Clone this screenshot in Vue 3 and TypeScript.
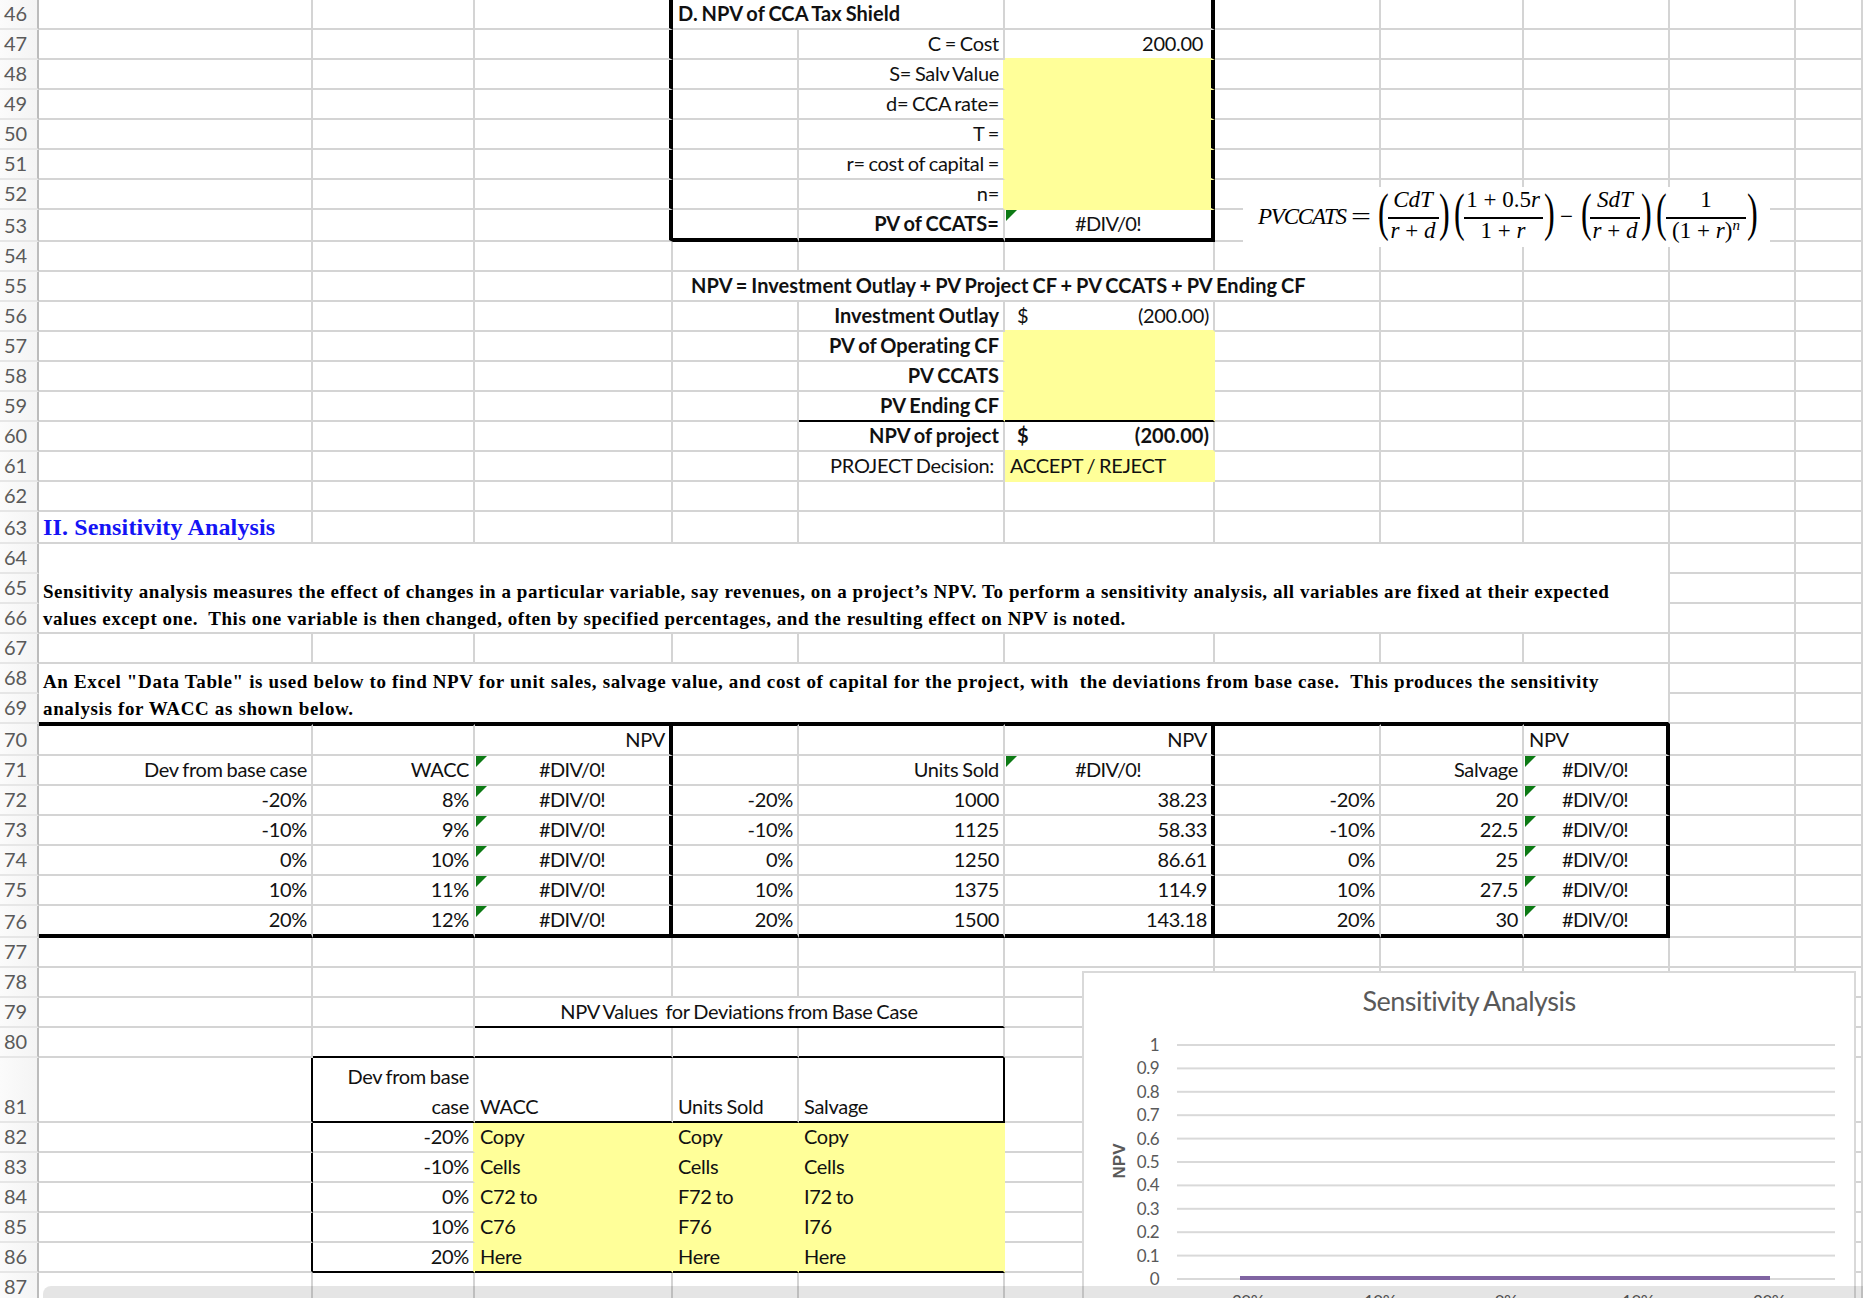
<script setup lang="ts">
interface Cell {
  t?: string
  left?: string
  cls?: string
  span?: number
  rows?: number
  skip?: boolean
}

interface Row {
  n: number
  h: number
  cells: (Cell & { key: string })[]
}

interface MathPart {
  t: string
  it?: boolean
  sup?: boolean
}

const colWidths = [39, 274, 162, 198, 126, 206, 210, 166, 143, 146, 126, 67]
const colNames = 'ABCDEFGHIJK'.split('')

const right = (t: string, cls = ''): Cell => ({ t, cls: 'right ' + cls })
const lead = (t: string, cls = ''): Cell => ({ t, cls: 'lead ' + cls })
const flag = (t: string, cls = ''): Cell => ({ t, cls: 'mid flag ' + cls })

// fills in the blank cells so a row only lists what it holds
const row = (n: number, h: number, spec: Record<string, Cell> = {}): Row => {
  const cells: Row['cells'] = []
  let i = 0
  while (i < colNames.length) {
    const key = colNames[i]
    const c = spec[key] ?? {}
    if (!c.skip) cells.push({ ...c, key })
    i += c.span ?? 1
  }
  return { n, h, cells }
}

const plainRow = (n: number) => row(n, 30)

const boxLabel = (n: number, label: string) =>
  row(n, 30, {
    C: { cls: 'edge-r' },
    E: right(label, 'fill-r'),
    F: { cls: 'fill edge-r' }
  })

const sumLabel = (n: number, label: string, extra = '') =>
  row(n, 30, {
    E: right(label, 'bold fill-r ' + extra),
    F: { cls: 'fill ' + extra }
  })

const sensRow = (n: number, h: number, vals: string[], last = '') =>
  row(n, h, {
    A: right(vals[0], last),
    B: right(vals[1], last),
    C: flag('#DIV/0!', 'edge-r ' + last),
    D: right(vals[0], last),
    E: right(vals[2], last),
    F: right(vals[3], 'edge-r ' + last),
    G: right(vals[0], last),
    H: right(vals[4], last),
    I: flag('#DIV/0!', 'edge-r ' + last)
  })

const copyRow = (n: number, pct: string, c: string, d: string, e: string, last = '') =>
  row(n, 30, {
    A: { cls: 'thin-r' },
    B: right(pct, 'fill-r ' + last),
    C: lead(c, 'fill ' + last),
    D: lead(d, 'fill ' + last),
    E: lead(e, 'fill ' + last)
  })

const rows: Row[] = [
  row(46, 28, {
    C: { cls: 'edge-r' },
    D: { t: 'D. NPV of CCA Tax Shield', cls: 'lead bold', span: 2 },
    F: { cls: 'edge-r' }
  }),
  row(47, 30, {
    C: { cls: 'edge-r' },
    E: right('C = Cost'),
    F: right('200.00', 'edge-r fill-b pad-val')
  }),
  boxLabel(48, 'S= Salv Value'),
  boxLabel(49, 'd= CCA rate='),
  boxLabel(50, 'T ='),
  boxLabel(51, 'r= cost of capital ='),
  boxLabel(52, 'n='),
  row(53, 32, {
    C: { cls: 'edge-r' },
    D: { cls: 'edge-b' },
    E: right('PV of CCATS=', 'bold edge-b'),
    F: flag('#DIV/0!', 'edge-r edge-b')
  }),
  plainRow(54),
  row(55, 30, {
    D: { t: 'NPV = Investment Outlay + PV Project CF + PV CCATS + PV Ending CF', cls: 'bold npv-title', span: 4 }
  }),
  row(56, 30, {
    E: right('Investment Outlay', 'bold'),
    F: { t: '(200.00)', left: '$', cls: 'money fill-b' }
  }),
  sumLabel(57, 'PV of Operating CF'),
  sumLabel(58, 'PV CCATS'),
  sumLabel(59, 'PV Ending CF', 'thin-b'),
  row(60, 30, {
    E: right('NPV of project', 'bold'),
    F: { t: '(200.00)', left: '$', cls: 'money bold fill-b' }
  }),
  row(61, 30, {
    E: right('PROJECT Decision:', 'pad-r'),
    F: lead('ACCEPT / REJECT', 'fill')
  }),
  plainRow(62),
  row(63, 32, { A: { t: 'II. Sensitivity Analysis', cls: 'section' } }),
  row(64, 30, {
    A: {
      t: 'Sensitivity analysis measures the effect of changes in a particular variable, say revenues, on a project’s NPV. To perform a sensitivity analysis, all variables are fixed at their expected\nvalues except one.  This one variable is then changed, often by specified percentages, and the resulting effect on NPV is noted.',
      cls: 'note',
      span: 9,
      rows: 3
    }
  }),
  row(65, 30, { A: { skip: true, span: 9 } }),
  row(66, 30, { A: { skip: true, span: 9 } }),
  plainRow(67),
  row(68, 30, {
    A: {
      t: 'An Excel "Data Table" is used below to find NPV for unit sales, salvage value, and cost of capital for the project, with  the deviations from base case.  This produces the sensitivity\nanalysis for WACC as shown below.',
      cls: 'note note-wide rule-b',
      span: 9,
      rows: 2
    }
  }),
  row(69, 30, { A: { skip: true, span: 9 } }),
  row(70, 31, {
    A: { cls: 'rule-t' },
    B: { cls: 'rule-t' },
    C: right('NPV', 'rule-t edge-r'),
    D: { cls: 'rule-t' },
    E: { cls: 'rule-t' },
    F: right('NPV', 'rule-t edge-r'),
    G: { cls: 'rule-t' },
    H: { cls: 'rule-t' },
    I: lead('NPV', 'rule-t edge-r')
  }),
  row(71, 30, {
    A: right('Dev from base case'),
    B: right('WACC'),
    C: flag('#DIV/0!', 'edge-r'),
    E: right('Units Sold'),
    F: flag('#DIV/0!', 'edge-r'),
    H: right('Salvage'),
    I: flag('#DIV/0!', 'edge-r')
  }),
  sensRow(72, 30, ['-20%', '8%', '1000', '38.23', '20']),
  sensRow(73, 30, ['-10%', '9%', '1125', '58.33', '22.5']),
  sensRow(74, 30, ['0%', '10%', '1250', '86.61', '25']),
  sensRow(75, 30, ['10%', '11%', '1375', '114.9', '27.5']),
  sensRow(76, 32, ['20%', '12%', '1500', '143.18', '30'], 'edge-b'),
  plainRow(77),
  plainRow(78),
  row(79, 30, {
    C: { t: 'NPV Values  for Deviations from Base Case', cls: 'mid thin-b', span: 3 }
  }),
  row(80, 30, {
    B: { cls: 'thin-b' },
    C: { cls: 'thin-b' },
    D: { cls: 'thin-b' },
    E: { cls: 'thin-b' }
  }),
  row(81, 65, {
    A: { cls: 'thin-r' },
    B: { t: 'Dev from base\ncase', cls: 'right thin-b two-line' },
    C: lead('WACC', 'thin-b'),
    D: lead('Units Sold', 'thin-b'),
    E: lead('Salvage', 'thin-b thin-r')
  }),
  copyRow(82, '-20%', 'Copy', 'Copy', 'Copy'),
  copyRow(83, '-10%', 'Cells', 'Cells', 'Cells'),
  copyRow(84, '0%', 'C72 to', 'F72 to', 'I72 to'),
  copyRow(85, '10%', 'C76', 'F76', 'I76'),
  copyRow(86, '20%', 'Here', 'Here', 'Here', 'thin-b'),
  row(87, 28)
]

// formula, in page coordinates
const fracBars = [
  { x: 1388, w: 51 },
  { x: 1464, w: 79 },
  { x: 1590, w: 50 },
  { x: 1666, w: 80 }
]
const rPlusD: MathPart[] = [{ t: 'r', it: true }, { t: ' + ' }, { t: 'd', it: true }]
const fracText: { x: number; y: number; parts: MathPart[] }[] = [
  { x: 1413, y: 207, parts: [{ t: 'CdT', it: true }] },
  { x: 1413, y: 238, parts: rPlusD },
  { x: 1503, y: 207, parts: [{ t: '1 + 0.5' }, { t: 'r', it: true }] },
  { x: 1503, y: 238, parts: [{ t: '1 + ' }, { t: 'r', it: true }] },
  { x: 1615, y: 207, parts: [{ t: 'SdT', it: true }] },
  { x: 1615, y: 238, parts: rPlusD },
  { x: 1706, y: 207, parts: [{ t: '1' }] },
  { x: 1706, y: 238, parts: [{ t: '(1 + ' }, { t: 'r', it: true }, { t: ')' }, { t: 'n', it: true, sup: true }] }
]
const parens = [
  { x: 1378, t: '(' }, { x: 1439, t: ')' },
  { x: 1454, t: '(' }, { x: 1544, t: ')' },
  { x: 1581, t: '(' }, { x: 1641, t: ')' },
  { x: 1656, t: '(' }, { x: 1747, t: ')' }
]

// chart
const ticks = ['1', '0.9', '0.8', '0.7', '0.6', '0.5', '0.4', '0.3', '0.2', '0.1', '0']
const tickY = (i: number) => 1045 + i * 23.4
const axisLabels = [
  { x: 1245, t: '-20%' },
  { x: 1377, t: '-10%' },
  { x: 1506, t: '0%' },
  { x: 1638, t: '10%' },
  { x: 1769, t: '20%' }
]
</script>

<template>
  <div class="sheet">
    <table class="grid">
      <colgroup>
        <col v-for="(w, i) in colWidths" :key="i" :width="w" />
      </colgroup>
      <tbody>
        <tr v-for="r in rows" :key="r.n" :style="{ height: r.h + 'px' }">
          <td class="head">{{ r.n }}</td>
          <td
            v-for="c in r.cells"
            :key="c.key"
            :class="c.cls"
            :colspan="c.span ?? 1"
            :rowspan="c.rows ?? 1"
          >
            <div v-if="c.left" class="money-row">
              <span>{{ c.left }}</span>
              <span>{{ c.t }}</span>
            </div>
            <template v-else>{{ c.t }}</template>
          </td>
        </tr>
      </tbody>
    </table>

    <svg class="formula" viewBox="1243 187 527 60" width="527" height="60">
      <text class="math math-i" x="1258" y="224" textLength="89">PVCCATS</text>
      <text class="math" x="1351" y="224" textLength="20" lengthAdjust="spacingAndGlyphs">=</text>
      <rect v-for="b in fracBars" :key="b.x" :x="b.x" y="217" :width="b.w" height="2" />
      <text
        v-for="f in fracText"
        :key="f.x + '-' + f.y"
        class="math"
        :x="f.x"
        :y="f.y"
        text-anchor="middle"
      >
        <tspan
          v-for="(p, i) in f.parts"
          :key="i"
          :class="{ 'math-i': p.it, 'math-sup': p.sup }"
          :dy="p.sup ? -8 : undefined"
        >{{ p.t }}</tspan>
      </text>
      <text
        v-for="p in parens"
        :key="p.x"
        class="paren"
        :transform="`translate(${p.x} 230) scale(0.62 1)`"
      >{{ p.t }}</text>
      <text class="math" x="1560" y="224">−</text>
    </svg>

    <div class="chart">
      <svg viewBox="1084 973 770 340" width="770" height="340">
        <text class="chart-title" x="1469" y="1011" text-anchor="middle">Sensitivity Analysis</text>
        <text class="chart-axis" transform="translate(1125 1161) rotate(-90)" text-anchor="middle">NPV</text>
        <g v-for="(t, i) in ticks" :key="t">
          <rect x="1177" :y="tickY(i) - 1" width="658" height="2" class="chart-line" />
          <text class="chart-tick" x="1159" :y="tickY(i) + 6" text-anchor="end">{{ t }}</text>
        </g>
        <rect x="1240" y="1276" width="530" height="4" class="chart-series" />
        <text
          v-for="a in axisLabels"
          :key="a.t"
          class="chart-tick"
          :x="a.x"
          y="1308"
          text-anchor="middle"
        >{{ a.t }}</text>
      </svg>
    </div>

    <div class="scrollbar"></div>
  </div>
</template>

<style>
html,
body {
  overflow: hidden;
}
</style>

<style scoped>
.sheet {
  position: relative;
  width: 1863px;
  height: 1298px;
  overflow: hidden;
  background: #fff;
  font-family: Lato, "Liberation Sans", sans-serif;
  font-size: 20px;
  letter-spacing: -0.3px;
  word-spacing: -1px;
  color: #111;
}

.grid {
  table-layout: fixed;
  width: 1863px;
  border-collapse: separate;
  border-spacing: 0;
}

.grid td {
  position: relative;
  box-sizing: border-box;
  padding: 0 0 2px;
  border-right: 2px solid #d4d4d4;
  border-bottom: 2px solid #d4d4d4;
  vertical-align: bottom;
  line-height: 26px;
  white-space: pre;
  overflow: hidden;
}

.grid td.head {
  padding-left: 4px;
  background: linear-gradient(to right, #fbfbfb, #f4f4f4);
  border-right-color: #bcbcbc;
  border-bottom-color: #e6e6e6;
  color: #5a5a5a;
  font-size: 20px;
  letter-spacing: -0.2px;
}

.grid td.right {
  text-align: right;
  padding-right: 4px;
}

.grid td.lead {
  text-align: left;
  padding-left: 5px;
}

.grid td.mid {
  text-align: center;
}

.grid td.bold {
  font-weight: 700;
  letter-spacing: 0.05px;
}

.grid td.two-line {
  line-height: 30px;
  padding-bottom: 0;
}

.grid td.pad-val {
  padding-right: 8px;
}

.grid td.pad-r {
  padding-right: 9px;
}

.grid td.npv-title {
  padding-left: 18px;
}

.grid td.flag {
  letter-spacing: -0.7px;
}

.grid td.flag::before {
  content: "";
  position: absolute;
  left: 1px;
  top: 0;
  width: 11px;
  height: 11px;
  background: #0c7a14;
  clip-path: polygon(0 0, 100% 0, 0 100%);
}

.grid td.fill {
  background: #ffff99;
  border-right-color: #ffff99;
  border-bottom-color: #ffff99;
}

.grid td.fill-r {
  border-right-color: #ffff99;
}

.grid td.fill-b {
  border-bottom-color: #ffff99;
}

.grid td.edge-r {
  border-right: 4px solid #000;
}

.grid td.edge-b {
  border-bottom: 4px solid #000;
}

.grid td.thin-r {
  border-right-color: #000;
}

.grid td.thin-b {
  border-bottom-color: #000;
}

.grid td.rule-t {
  border-top: 2px solid #000;
}

.grid td.rule-b {
  border-bottom-color: #000;
}

.grid td.section {
  padding-left: 4px;
  font-family: "Liberation Serif", serif;
  font-size: 24px;
  font-weight: 700;
  letter-spacing: 0.15px;
  word-spacing: 0;
  color: #1414f5;
}

.grid td.note {
  padding: 0 0 0 4px;
  font-family: "Liberation Serif", serif;
  font-size: 19px;
  font-weight: 700;
  line-height: 26.5px;
  letter-spacing: 0.55px;
  word-spacing: 0;
  color: #000;
}

.grid td.note-wide {
  letter-spacing: 0.64px;
}

.money-row {
  display: flex;
  justify-content: space-between;
  padding: 0 4px 0 12px;
}

.formula {
  position: absolute;
  left: 1243px;
  top: 187px;
  overflow: visible;
  background: #fff;
  letter-spacing: 0;
  word-spacing: 0;
}

.math {
  font-family: "Liberation Serif", serif;
  font-size: 23px;
  fill: #000;
}

.math-i {
  font-style: italic;
}

.math-sup {
  font-size: 15px;
}

.paren {
  font-family: "Liberation Serif", serif;
  font-size: 52px;
  fill: #000;
}

.chart {
  position: absolute;
  left: 1082px;
  top: 971px;
  width: 774px;
  height: 340px;
  box-sizing: border-box;
  border: 2px solid #d9d9d9;
  background: #fff;
}

.chart svg {
  display: block;
}

.chart-title {
  font-size: 27px;
  letter-spacing: -0.5px;
  fill: #595959;
}

.chart-axis {
  font-family: "Liberation Sans", sans-serif;
  font-size: 17px;
  font-weight: 700;
  letter-spacing: 0;
  fill: #595959;
}

.chart-tick {
  font-size: 17px;
  letter-spacing: -0.5px;
  fill: #595959;
}

.chart-line {
  fill: #d9d9d9;
}

.chart-series {
  fill: #8064a2;
}

.scrollbar {
  position: absolute;
  left: 43px;
  right: -20px;
  top: 1286px;
  height: 24px;
  border-radius: 8px;
  background: rgba(0, 0, 0, 0.1);
}
</style>
